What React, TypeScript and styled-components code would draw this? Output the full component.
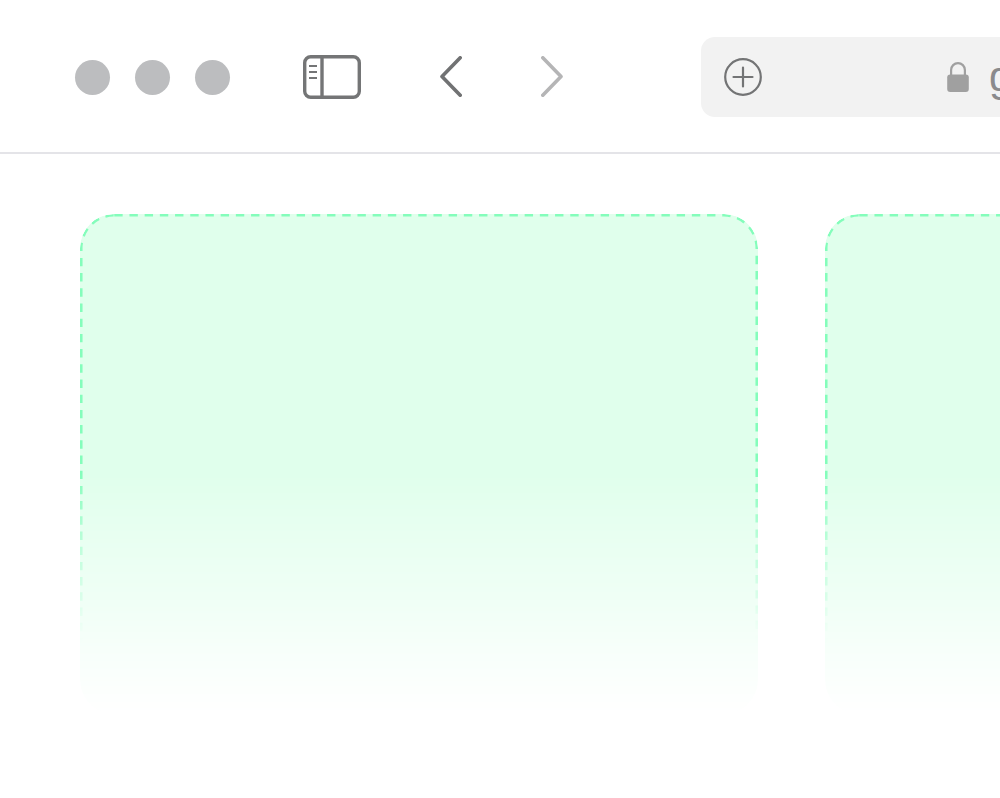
import React from 'react';
import styled, { createGlobalStyle } from 'styled-components';

const GlobalStyle = createGlobalStyle`
  html, body {
    margin: 0;
    padding: 0;
    height: 100%;
    background: #fff;
    overflow: hidden;
    font-family: "Liberation Sans", Arial, sans-serif;
  }
`;

const Page = styled.div`
  width: 1000px;
  height: 798px;
  overflow: hidden;
  background: #fff;
`;

const Toolbar = styled.header`
  display: flex;
  align-items: center;
  box-sizing: border-box;
  height: 154px;
  padding: 2px 0 0 75px;
  border-bottom: 2px solid #e4e4e8;
`;

const Lights = styled.div`
  display: flex;
  gap: 25px;
  margin-right: 73px;
`;

const Light = styled.span`
  display: block;
  width: 35px;
  height: 35px;
  border-radius: 50%;
  background: #bcbdbf;
`;

const IconButton = styled.button<{ $gap: number }>`
  display: flex;
  flex: none;
  padding: 0;
  border: 0;
  background: none;
  margin-right: ${(p) => p.$gap}px;
`;

const Address = styled.div`
  display: flex;
  flex: none;
  align-items: center;
  box-sizing: border-box;
  width: 640px;
  height: 80px;
  padding-left: 23px;
  border-radius: 14px;
  background: #f2f2f2;
`;

const LockSlot = styled.span`
  display: flex;
  flex: none;
  margin-left: 185px;
`;

const Url = styled.span`
  margin-left: 20px;
  font-size: 42px;
  line-height: 1;
  color: #8a8a8c;
  white-space: nowrap;
`;

const Cards = styled.main`
  display: grid;
  grid-template-columns: 678px 678px;
  gap: 67px;
  padding: 60px 0 0 80px;
`;

// custom dash length, css dashed borders are too short here. dashes fade out before the fill does
const dashSvg = encodeURIComponent(
  `<svg xmlns="http://www.w3.org/2000/svg" width="100%" height="100%"><defs><linearGradient id="d" gradientUnits="userSpaceOnUse" x1="0" y1="0" x2="0" y2="430"><stop offset="0.6" stop-color="#84fdbb"/><stop offset="0.9" stop-color="#84fdbb" stop-opacity="0.45"/><stop offset="1" stop-color="#84fdbb" stop-opacity="0"/></linearGradient></defs><rect x="1.25" y="1.25" width="675.5" height="497.5" rx="33" ry="33" fill="none" stroke="url(#d)" stroke-width="2.6" stroke-dasharray="8.4 6.8"/></svg>`,
);

const Card = styled.section`
  height: 500px;
  border-radius: 34px;
  background: url("data:image/svg+xml,${dashSvg}") no-repeat, #e0ffec;
  mask-image: linear-gradient(
    to bottom,
    #000 0,
    #000 260px,
    rgba(0, 0, 0, 0.72) 326px,
    rgba(0, 0, 0, 0.5) 386px,
    rgba(0, 0, 0, 0.25) 436px,
    rgba(0, 0, 0, 0.06) 486px,
    rgba(0, 0, 0, 0) 500px
  );
`;

const SidebarIcon = () => (
  <svg width="58" height="44" viewBox="0 0 58 44" fill="none" stroke="#747576" strokeWidth="3.4">
    <rect x="1.7" y="1.7" width="54.6" height="40.6" rx="6" />
    <path d="M19 2v40" />
    <path d="M6 11h8M6 17h8M6 23h8" strokeWidth="2.2" />
  </svg>
);

const ChevronLeft = () => (
  <svg width="22" height="42" viewBox="0 0 22 42" fill="none" stroke="#717273" strokeWidth="3.6" strokeLinecap="round" strokeLinejoin="round">
    <path d="M20.2 1.8L2 20.5 20.2 39.2" />
  </svg>
);

const ChevronRight = () => (
  <svg width="22" height="42" viewBox="0 0 22 42" fill="none" stroke="#b5b5b6" strokeWidth="3.6" strokeLinecap="round" strokeLinejoin="round">
    <path d="M1.8 1.8L20 20.5 1.8 39.2" />
  </svg>
);

const PlusCircle = () => (
  <svg width="38" height="38" viewBox="0 0 38 38" fill="none" stroke="#737475" strokeWidth="2.2" strokeLinecap="round">
    <circle cx="19" cy="19" r="17.8" />
    <path d="M19 9.5v19M9.5 19h19" />
  </svg>
);

const Lock = () => (
  <svg width="22" height="30" viewBox="0 0 22 30">
    <path d="M4.1 14V8a6.9 6.9 0 0 1 13.8 0v6" fill="none" stroke="#a0a0a0" strokeWidth="2.2" />
    <rect x="0.2" y="12.5" width="21.6" height="17.5" rx="3" fill="#a0a0a0" />
  </svg>
);

export default function App() {
  return (
    <Page>
      <GlobalStyle />
      <Toolbar>
        <Lights>
          <Light />
          <Light />
          <Light />
        </Lights>
        <IconButton $gap={79} aria-label="Sidebar">
          <SidebarIcon />
        </IconButton>
        <IconButton $gap={79} aria-label="Back">
          <ChevronLeft />
        </IconButton>
        <IconButton $gap={138} aria-label="Forward">
          <ChevronRight />
        </IconButton>
        <Address>
          <PlusCircle />
          <LockSlot>
            <Lock />
          </LockSlot>
          <Url>github.com</Url>
        </Address>
      </Toolbar>
      <Cards>
        <Card />
        <Card />
      </Cards>
    </Page>
  );
}
